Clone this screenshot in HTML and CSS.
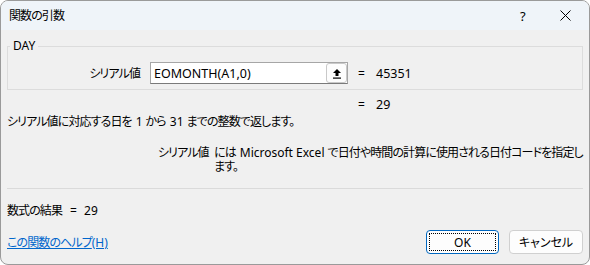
FILE: index.html
```html
<!DOCTYPE html>
<html lang="ja">
<head>
<meta charset="utf-8">
<title>関数の引数</title>
<link rel="stylesheet" href="styles.css">
</head>
<body>
<div class="win">
  <div class="titlebar">
    <span class="title">関数の引数</span>
    <span class="help">?</span>
    <span class="close"><svg width="11" height="11" viewBox="0 0 11 11"><path d="M0.5 0.5 L10.5 10.5 M10.5 0.5 L0.5 10.5" stroke="#000" stroke-width="1" fill="none"/></svg></span>
  </div>
  <div class="content">
    <fieldset class="group">
      <legend class="l">DAY</legend>
      <div class="argrow">
        <span class="arglabel">シリアル値</span>
        <div class="input">
          <span class="inputtext l">EOMONTH(A1,0)</span>
          <span class="refbtn"><svg width="10" height="11" viewBox="0 0 10 11"><path d="M5 1 L1 5 H3.5 V8 H6.5 V5 H9 Z" fill="#000"/><rect x="1" y="9.5" width="8" height="1.2" fill="#000"/></svg></span>
        </div>
        <span class="eq">=</span><span class="val l">45351</span>
      </div>
    </fieldset>
    <div class="resultrow"><span class="eq">=</span><span class="val l">29</span></div>
    <div class="desc">シリアル値に対応する日を<span class="li">1</span>から<span class="li">31</span>までの整数で返します。</div>
    <div class="argdesc">
      <span class="argname">シリアル値</span>
      <span class="argtext"><span>には</span><span class="li">Microsoft Excel</span><span>で日付や時間の計算に使用される日付コードを指定し</span><span>ます。</span></span>
    </div>
    <div class="sep"></div>
    <div class="formula"><span>数式の結果</span><span class="eq2">=</span><span class="l">29</span></div>
    <div class="footer">
      <a class="helplink" href="#">この関数のヘルプ<span class="l">(H)</span></a>
      <div class="buttons">
        <button class="btn ok"><span class="focus l">OK</span></button>
        <button class="btn">キャンセル</button>
      </div>
    </div>
  </div>
</div>
</body>
</html>
```

FILE: styles.css
```css
html, body {
  margin: 0;
  padding: 0;
  background: #ffffff;
}
body {
  font-family: "Noto Sans", "Noto Sans CJK JP", sans-serif;
  font-size: 12px;
  color: #000;
  font-feature-settings: "palt";
  letter-spacing: -0.9px;
}
.l {
  letter-spacing: 0;
}
.li {
  display: inline-block;
  letter-spacing: 0;
  margin: 0 3px 0 4px;
}
.win {
  box-sizing: border-box;
  width: 590px;
  height: 265px;
  border: 1px solid #9a9a9a;
  border-radius: 8px;
  overflow: hidden;
  background: #f0f0f0;
  display: flex;
  flex-direction: column;
}
.titlebar {
  height: 29px;
  background: #eff4f9;
  display: flex;
  align-items: center;
  padding-left: 8px;
  flex: none;
}
.title {
  flex: 1;
  line-height: 16px;
}
.help {
  width: 12px;
  margin-right: 28px;
  font-size: 13px;
  letter-spacing: 0;
}
.close {
  display: flex;
  margin-right: 18px;
}
.content {
  padding: 0 6px;
  display: flex;
  flex-direction: column;
}
.group {
  margin: 8px 0 0 0;
  padding: 8px 0 5px 0;
  border: 1px solid #dcdcdc;
  min-width: 0;
}
.group legend {
  margin-left: 2px;
  padding: 0 3px;
  line-height: 16px;
}
.argrow {
  display: flex;
  align-items: center;
  height: 22px;
}
.arglabel {
  width: 132px;
  text-align: right;
  margin-right: 10px;
}
.input {
  box-sizing: border-box;
  width: 198px;
  height: 22px;
  background: #fff;
  border: 1px solid #a6a6a6;
  border-bottom-color: #7a7a7a;
  display: flex;
  align-items: center;
  justify-content: space-between;
  padding-left: 3px;
  padding-right: 0;
  margin-right: 10px;
}
.inputtext {
  font-size: 12.5px;
}
.refbtn {
  box-sizing: border-box;
  width: 21px;
  height: 20px;
  border: 1px solid #c9c9c9;
  border-radius: 3px;
  background: #fdfdfd;
  display: flex;
  align-items: center;
  justify-content: center;
}
.eq {
  display: inline-block;
  width: 18px;
  letter-spacing: 0;
}
.val {
  font-size: 12.5px;
}
.resultrow {
  margin-top: 7px;
  padding-left: 351px;
  line-height: 16px;
}
.desc {
  margin-top: 1px;
  line-height: 16px;
}
.argdesc {
  margin-top: 16px;
  display: flex;
  line-height: 14px;
}
.argname {
  margin-left: 151px;
  width: 56px;
  flex: none;
}
.argtext {
  width: 372px;
}
.sep {
  margin-top: 14px;
  height: 1px;
  background: #dadada;
}
.formula {
  margin-top: 14px;
  line-height: 16px;
  display: flex;
}
.eq2 {
  letter-spacing: 0;
  margin-left: 8px;
  width: 14px;
}
.footer {
  margin-top: 11px;
  display: flex;
  align-items: center;
  justify-content: space-between;
}
.helplink {
  color: #0066cc;
  text-decoration: underline;
  line-height: 16px;
  padding-top: 2px;
}
.buttons {
  display: flex;
  gap: 10px;
}
.btn {
  box-sizing: border-box;
  width: 74px;
  height: 24px;
  border: 1px solid #d0d0d0;
  border-radius: 4px;
  background: #fdfdfd;
  font: inherit;
  color: #000;
  padding: 0;
  display: flex;
  align-items: center;
  justify-content: center;
}
.ok {
  width: 73px;
  border: 1px solid #0067c0;
  padding: 2px;
}
.focus {
  box-sizing: border-box;
  width: 100%;
  height: 100%;
  border: 1px dotted #000;
  display: flex;
  align-items: center;
  justify-content: center;
}
```
